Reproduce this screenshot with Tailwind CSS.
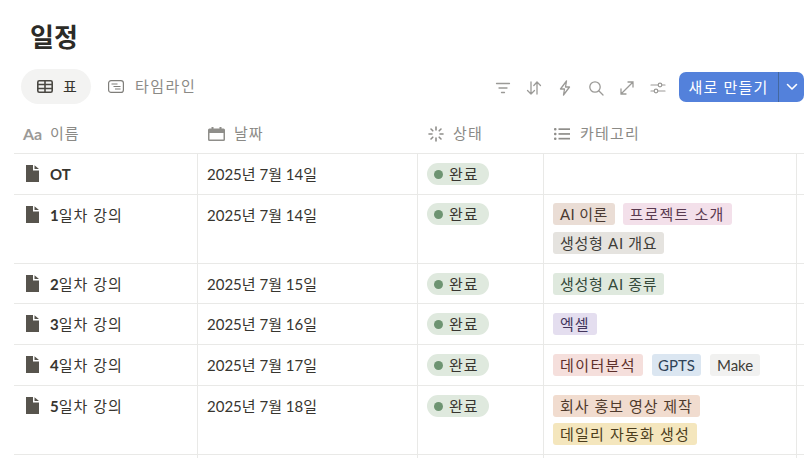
<!DOCTYPE html>
<html lang="ko">
<head>
  <meta charset="UTF-8" />
  <meta name="viewport" content="width=device-width, initial-scale=1.0" />
  <title>일정</title>
  <script src="https://cdn.jsdelivr.net/npm/@tailwindcss/browser@4"></script>
</head>
<body class="bg-white w-[804px] h-[458px] overflow-hidden font-['Lato','Noto_Sans_CJK_KR',sans-serif] text-[15px] text-[#37352f]">
  <!-- title -->
  <h1 class="h-[69px] pl-[30px] pt-[19px] text-[26px] leading-[36px] font-bold text-[#2c2b27]">일정</h1>

  <!-- views + toolbar -->
  <div class="h-[35px] flex items-center">
    <div class="ml-[21px] w-[70px] h-[35px] rounded-full bg-[#f3f3f2] flex items-center pl-[16px] gap-[10px] text-[#37352f]">
      <svg width="16" height="13" viewBox="0 0 16 13" fill="none" stroke="#4a4843" stroke-width="1.6"><rect x=".8" y=".8" width="14.400" height="11.400" rx="1.500"/><path d="M.8 4.500h14.400M.8 8.500h14.400M8 .8v11.400"/></svg>
      <span>표</span>
    </div>
    <div class="ml-[17px] flex items-center gap-[11px] text-[#8b8a86]">
      <svg width="16" height="13" viewBox="0 0 16 13" fill="none" stroke="#7f7e7a" stroke-width="1.200"><rect x=".6" y=".6" width="14.800" height="11.800" rx="2.500"/><path d="M3.500 4h6M5.500 6.500h7M7 9h5.500"/></svg>
      <span class="tracking-[1.500px]">타임라인</span>
    </div>
    <div class="ml-auto mt-[1px] flex items-center">
      <div class="flex items-center gap-[13px] mr-[12px] mt-[1px]">
        <svg width="18" height="18" viewBox="0 0 18 18" fill="none" stroke="#9b9a97" stroke-width="1.300" stroke-linecap="round"><path d="M2.500 4.500h13M5 9h8M7.500 13.500h3"/></svg>
        <svg width="18" height="18" viewBox="0 0 18 18" fill="none" stroke="#9b9a97" stroke-width="1.300" stroke-linecap="round" stroke-linejoin="round"><path d="M6 3v12M2.500 11.500 6 15l3.500-3.500M12 15V3M8.800 6.500 12 3l3.500 3.500"/></svg>
        <svg width="18" height="18" viewBox="0 0 18 18" fill="none" stroke="#9b9a97" stroke-width="1.300" stroke-linejoin="round"><path d="M10.500 2 4.500 10h4l-1 6 6-8h-4z"/></svg>
        <svg width="18" height="18" viewBox="0 0 18 18" fill="none" stroke="#9b9a97" stroke-width="1.300" stroke-linecap="round"><circle cx="8" cy="8" r="5.200"/><path d="m12 12 4 4"/></svg>
        <svg width="18" height="18" viewBox="0 0 18 18" fill="none" stroke="#9b9a97" stroke-width="1.300" stroke-linecap="round"><path d="M3 15 15 3M10 3h5v5M3 10v5h5"/></svg>
        <svg width="18" height="18" viewBox="0 0 18 18" fill="none" stroke="#9b9a97" stroke-width="1.200" stroke-linecap="round"><path d="M2 6h14M2 12h14"/><circle cx="11" cy="6" r="1.800" fill="#fff"/><circle cx="7" cy="12" r="1.800" fill="#fff"/></svg>
      </div>
      <div class="w-[125px] h-[30px] rounded-[7px] bg-[#5381db] text-white flex items-center">
        <span class="w-[99px] text-center tracking-[1.200px]">새로 만들기</span>
        <span class="w-[26px] h-full border-l border-[#44689f] flex items-center justify-center">
          <svg width="12" height="8" viewBox="0 0 12 8" fill="none" stroke="#fff" stroke-width="1.600" stroke-linecap="round" stroke-linejoin="round"><path d="m1.500 1.500 4.500 4.500 4.500-4.500"/></svg>
        </span>
      </div>
    </div>
  </div>

  <!-- table -->
  <div class="mt-[10px] ml-[14px] w-[790px] grid grid-cols-[184px_220px_126px_253px_7px] text-[#37352f]">
    <!-- header -->
    <div class="h-[40px] border-b border-[#e9e9e7] flex items-center gap-[8px] pl-[9px] text-[#8b8a86]">
      <span class="text-[16px] font-bold text-[#9b9a97] w-[19px]">Aa</span>
      <span class="tracking-[1px]">이름</span>
    </div>
    <div class="h-[40px] border-b border-[#e9e9e7] flex items-center gap-[9px] pl-[10px] text-[#8b8a86]">
      <svg width="17" height="14" viewBox="0 0 17 14" fill="#8f8e8a"><path d="M3.500 0h2v1.500h6V0h2v1.500h2A1.500 1.500 0 0 1 17 3v3H0V3a1.500 1.500 0 0 1 1.500-1.500h2zM0 6h1.500v6.500h14V6H17v6.500a1.500 1.500 0 0 1-1.500 1.500h-14A1.500 1.500 0 0 1 0 12.500z"/></svg>
      <span class="tracking-[1px]">날짜</span>
    </div>
    <div class="h-[40px] border-b border-[#e9e9e7] flex items-center gap-[9px] pl-[10px] text-[#8b8a86]">
      <svg width="16" height="16" viewBox="0 0 16 16" fill="none" stroke="#8f8e8a" stroke-width="1.600" stroke-linecap="round"><path d="M8 1v3M8 12v3M1 8h3M12 8h3M3 3l1.800 1.800M11.200 11.200 13 13M3 13l1.800-1.800M11.200 4.800 13 3"/></svg>
      <span class="tracking-[1.200px]">상태</span>
    </div>
    <div class="h-[40px] border-b border-[#e9e9e7] flex items-center gap-[10px] pl-[10px] text-[#8b8a86]">
      <svg width="16" height="14" viewBox="0 0 16 14" fill="#8f8e8a"><rect x="0" y="1" width="2.500" height="2.500" rx="1"/><rect x="0" y="5.800" width="2.500" height="2.500" rx="1"/><rect x="0" y="10.500" width="2.500" height="2.500" rx="1"/><rect x="4.500" y="1.300" width="11.500" height="1.700"/><rect x="4.500" y="6.100" width="11.500" height="1.700"/><rect x="4.500" y="10.800" width="11.500" height="1.700"/></svg>
      <span class="tracking-[1.200px]">카테고리</span>
    </div>
    <div class="h-[40px] border-b border-[#e9e9e7]"></div>

    <!-- OT -->
    <div class="h-[41px] border-b border-r border-[#e9e9e7] flex items-start gap-[11px] pl-[12px] pt-[10px]">
      <svg class="mt-[1px]" width="13" height="17" viewBox="0 0 13 17" fill="#57544d"><path d="M0 0h7v5.500h6V17H0zM8.500 .3 13 4H8.500z"/></svg>
      <span class="font-bold leading-[20px]">OT</span>
    </div>
    <div class="border-b border-r border-[#e9e9e7] pl-[9px] pt-[10px] leading-[20px]">2025년 7월 14일</div>
    <div class="border-b border-r border-[#e9e9e7] pl-[9px] pt-[9px]">
      <span class="w-[62px] h-[22px] rounded-full bg-[#dfe9de] flex items-center pl-[7px] gap-[6px]"><i class="w-[9px] h-[9px] rounded-full bg-[#6e9472]"></i><span class="tracking-[1px]">완료</span></span>
    </div>
    <div class="border-b border-r border-[#e9e9e7]"></div>
    <div class="border-b border-[#e9e9e7]"></div>

    <!-- 1일차 -->
    <div class="h-[69px] border-b border-r border-[#e9e9e7] flex items-start gap-[11px] pl-[12px] pt-[10px]">
      <svg class="mt-[1px]" width="13" height="17" viewBox="0 0 13 17" fill="#57544d"><path d="M0 0h7v5.500h6V17H0zM8.500 .3 13 4H8.500z"/></svg>
      <span class="leading-[20px]"><b>1</b><span class="tracking-[1px]">일차 강의</span></span>
    </div>
    <div class="border-b border-r border-[#e9e9e7] pl-[9px] pt-[10px] leading-[20px]">2025년 7월 14일</div>
    <div class="border-b border-r border-[#e9e9e7] pl-[9px] pt-[8px]">
      <span class="w-[62px] h-[22px] rounded-full bg-[#dfe9de] flex items-center pl-[7px] gap-[6px]"><i class="w-[9px] h-[9px] rounded-full bg-[#6e9472]"></i><span class="tracking-[1px]">완료</span></span>
    </div>
    <div class="border-b border-r border-[#e9e9e7] pl-[9px] pt-[8px] flex flex-wrap content-start gap-x-[8px] gap-y-[7px]">
      <span class="h-[22px] px-[7px] rounded-[3px] leading-[22px] bg-[#eaddd5] text-[#4a3a32] tracking-[0.35px]">AI 이론</span>
      <span class="h-[22px] px-[7px] rounded-[3px] leading-[22px] bg-[#f3e0ea] text-[#5a3a50] tracking-[1.200px]">프로젝트 소개</span>
      <span class="h-[22px] px-[7px] rounded-[3px] leading-[22px] bg-[#e5e3df] text-[#3f3d38] tracking-[0.7px]">생성형 AI 개요</span>
    </div>
    <div class="border-b border-[#e9e9e7]"></div>

    <!-- 2일차 -->
    <div class="h-[40px] border-b border-r border-[#e9e9e7] flex items-start gap-[11px] pl-[12px] pt-[10px]">
      <svg class="mt-[1px]" width="13" height="17" viewBox="0 0 13 17" fill="#57544d"><path d="M0 0h7v5.500h6V17H0zM8.500 .3 13 4H8.500z"/></svg>
      <span class="leading-[20px]"><b>2</b><span class="tracking-[1px]">일차 강의</span></span>
    </div>
    <div class="border-b border-r border-[#e9e9e7] pl-[9px] pt-[10px] leading-[20px]">2025년 7월 15일</div>
    <div class="border-b border-r border-[#e9e9e7] pl-[9px] pt-[9px]">
      <span class="w-[62px] h-[22px] rounded-full bg-[#dfe9de] flex items-center pl-[7px] gap-[6px]"><i class="w-[9px] h-[9px] rounded-full bg-[#6e9472]"></i><span class="tracking-[1px]">완료</span></span>
    </div>
    <div class="border-b border-r border-[#e9e9e7] pl-[9px] pt-[9px] flex">
      <span class="h-[22px] px-[7px] rounded-[3px] leading-[22px] bg-[#dfe9de] text-[#35493a] tracking-[0.7px]">생성형 AI 종류</span>
    </div>
    <div class="border-b border-[#e9e9e7]"></div>

    <!-- 3일차 -->
    <div class="h-[41px] border-b border-r border-[#e9e9e7] flex items-start gap-[11px] pl-[12px] pt-[10px]">
      <svg class="mt-[1px]" width="13" height="17" viewBox="0 0 13 17" fill="#57544d"><path d="M0 0h7v5.500h6V17H0zM8.500 .3 13 4H8.500z"/></svg>
      <span class="leading-[20px]"><b>3</b><span class="tracking-[1px]">일차 강의</span></span>
    </div>
    <div class="border-b border-r border-[#e9e9e7] pl-[9px] pt-[10px] leading-[20px]">2025년 7월 16일</div>
    <div class="border-b border-r border-[#e9e9e7] pl-[9px] pt-[9px]">
      <span class="w-[62px] h-[22px] rounded-full bg-[#dfe9de] flex items-center pl-[7px] gap-[6px]"><i class="w-[9px] h-[9px] rounded-full bg-[#6e9472]"></i><span class="tracking-[1px]">완료</span></span>
    </div>
    <div class="border-b border-r border-[#e9e9e7] pl-[9px] pt-[9px] flex">
      <span class="h-[22px] px-[7px] rounded-[3px] leading-[22px] bg-[#e4deef] text-[#43365c] tracking-[1px]">엑셀</span>
    </div>
    <div class="border-b border-[#e9e9e7]"></div>

    <!-- 4일차 -->
    <div class="h-[41px] border-b border-r border-[#e9e9e7] flex items-start gap-[11px] pl-[12px] pt-[10px]">
      <svg class="mt-[1px]" width="13" height="17" viewBox="0 0 13 17" fill="#57544d"><path d="M0 0h7v5.500h6V17H0zM8.500 .3 13 4H8.500z"/></svg>
      <span class="leading-[20px]"><b>4</b><span class="tracking-[1px]">일차 강의</span></span>
    </div>
    <div class="border-b border-r border-[#e9e9e7] pl-[9px] pt-[10px] leading-[20px]">2025년 7월 17일</div>
    <div class="border-b border-r border-[#e9e9e7] pl-[9px] pt-[9px]">
      <span class="w-[62px] h-[22px] rounded-full bg-[#dfe9de] flex items-center pl-[7px] gap-[6px]"><i class="w-[9px] h-[9px] rounded-full bg-[#6e9472]"></i><span class="tracking-[1px]">완료</span></span>
    </div>
    <div class="border-b border-r border-[#e9e9e7] pl-[9px] pt-[9px] flex gap-[9px]">
      <span class="h-[22px] px-[7px] rounded-[3px] leading-[22px] bg-[#f5dfdc] text-[#5d2f2a] tracking-[1.400px]">데이터분석</span>
      <span class="h-[22px] px-[6px] rounded-[3px] leading-[22px] bg-[#dbe6f1] text-[#2f4358]">GPTS</span>
      <span class="h-[22px] px-[7px] rounded-[3px] leading-[22px] bg-[#f1f1f0] text-[#3f3d38]">Make</span>
    </div>
    <div class="border-b border-[#e9e9e7]"></div>

    <!-- 5일차 -->
    <div class="h-[69px] border-b border-r border-[#e9e9e7] flex items-start gap-[11px] pl-[12px] pt-[10px]">
      <svg class="mt-[1px]" width="13" height="17" viewBox="0 0 13 17" fill="#57544d"><path d="M0 0h7v5.500h6V17H0zM8.500 .3 13 4H8.500z"/></svg>
      <span class="leading-[20px]"><b>5</b><span class="tracking-[1px]">일차 강의</span></span>
    </div>
    <div class="border-b border-r border-[#e9e9e7] pl-[9px] pt-[10px] leading-[20px]">2025년 7월 18일</div>
    <div class="border-b border-r border-[#e9e9e7] pl-[9px] pt-[9px]">
      <span class="w-[62px] h-[22px] rounded-full bg-[#dfe9de] flex items-center pl-[7px] gap-[6px]"><i class="w-[9px] h-[9px] rounded-full bg-[#6e9472]"></i><span class="tracking-[1px]">완료</span></span>
    </div>
    <div class="border-b border-r border-[#e9e9e7] pl-[9px] pt-[9px] flex flex-wrap content-start gap-y-[6px]">
      <span class="h-[22px] px-[7px] rounded-[3px] leading-[22px] bg-[#f1dccf] text-[#4f3a2c] tracking-[1px]">회사 홍보 영상 제작</span>
      <span class="h-[22px] px-[7px] rounded-[3px] leading-[22px] bg-[#f4e6bd] text-[#4c3d1c] tracking-[1.200px]">데일리 자동화 생성</span>
    </div>
    <div class="border-b border-[#e9e9e7]"></div>

    <!-- next row, cut off by the window -->
    <div class="h-[10px] border-r border-[#e9e9e7]"></div>
    <div class="border-r border-[#e9e9e7]"></div>
    <div class="border-r border-[#e9e9e7]"></div>
    <div class="border-r border-[#e9e9e7]"></div>
    <div></div>
  </div>
</body>
</html>
